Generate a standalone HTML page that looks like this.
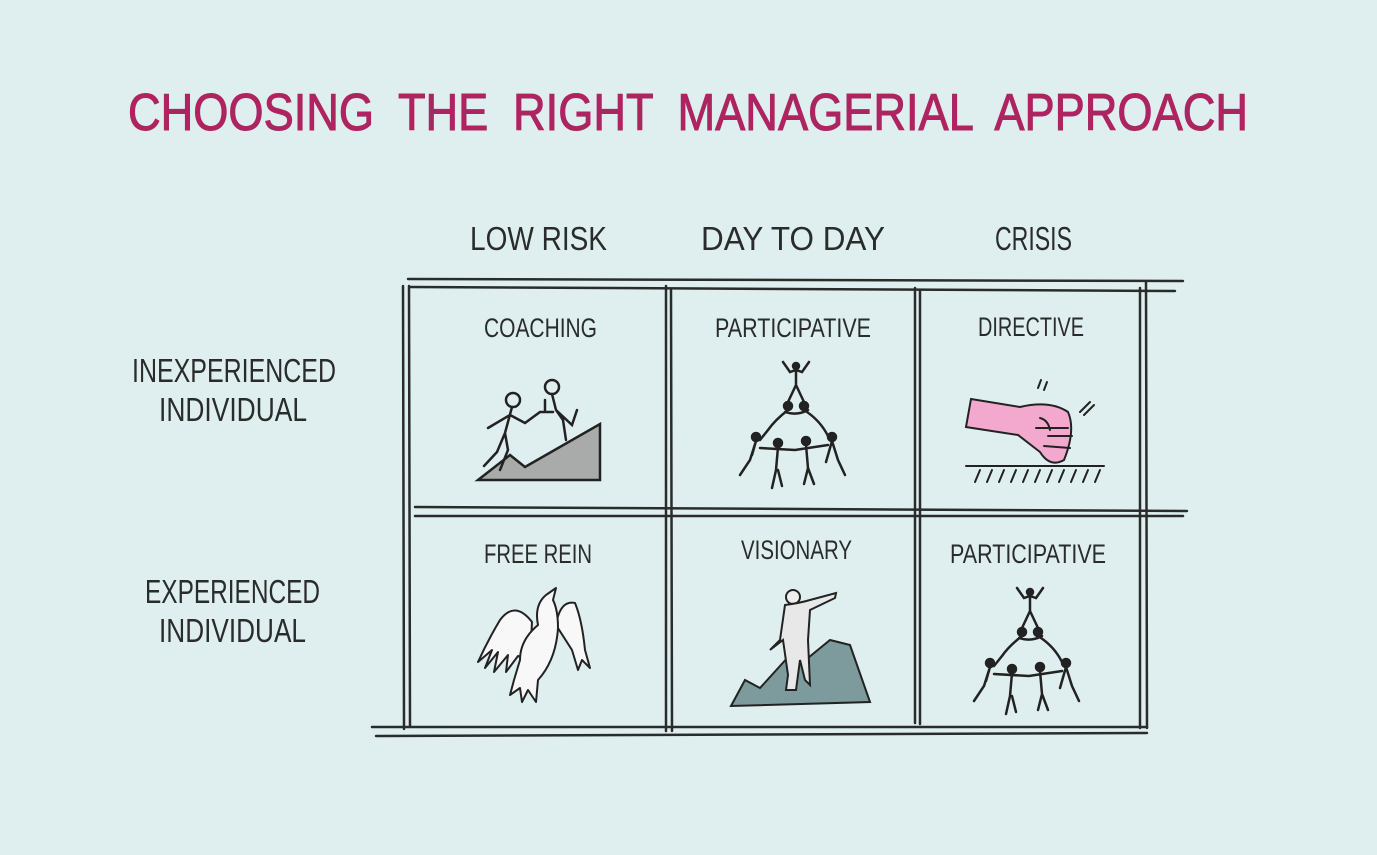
<!DOCTYPE html>
<html><head><meta charset="utf-8"><style>
html,body{margin:0;padding:0;background:#dfeeee;}
svg{display:block}
text{font-family:"Liberation Sans Narrow","Liberation Sans",sans-serif;fill:#2a2c2c}
</style></head><body>
<svg width="1377" height="855" viewBox="0 0 1377 855">
<rect width="1377" height="855" fill="#dfeeee"/>
<text x="128" y="130" font-size="52" word-spacing="14" textLength="1120" lengthAdjust="spacingAndGlyphs" style="fill:#ad2460;stroke:#ad2460;stroke-width:1;font-family:'Liberation Sans Narrow','Liberation Sans',sans-serif">CHOOSING THE RIGHT MANAGERIAL APPROACH</text>
<g font-size="33">
<text x="470" y="250" textLength="137" lengthAdjust="spacingAndGlyphs">LOW RISK</text>
<text x="701" y="250" textLength="184" lengthAdjust="spacingAndGlyphs">DAY TO DAY</text>
<text x="995" y="250" textLength="77" lengthAdjust="spacingAndGlyphs">CRISIS</text>
<text x="132" y="382" textLength="204" lengthAdjust="spacingAndGlyphs">INEXPERIENCED</text>
<text x="159" y="421" textLength="148" lengthAdjust="spacingAndGlyphs">INDIVIDUAL</text>
<text x="145" y="603" textLength="175" lengthAdjust="spacingAndGlyphs">EXPERIENCED</text>
<text x="159" y="642" textLength="147" lengthAdjust="spacingAndGlyphs">INDIVIDUAL</text>
</g>
<g font-size="27">
<text x="484" y="337" textLength="113" lengthAdjust="spacingAndGlyphs">COACHING</text>
<text x="715" y="337" textLength="156" lengthAdjust="spacingAndGlyphs">PARTICIPATIVE</text>
<text x="978" y="336" textLength="106" lengthAdjust="spacingAndGlyphs">DIRECTIVE</text>
<text x="484" y="563" textLength="108" lengthAdjust="spacingAndGlyphs">FREE REIN</text>
<text x="741" y="559" textLength="111" lengthAdjust="spacingAndGlyphs">VISIONARY</text>
<text x="950" y="563" textLength="156" lengthAdjust="spacingAndGlyphs">PARTICIPATIVE</text>
</g>
<g stroke="#2a2c2c" stroke-width="2.5" fill="none" stroke-linecap="round">
<path d="M408 279 L1183 281 M410 287 L1175 291"/>
<path d="M403 286 L404 729 M409 286 L410 727"/>
<path d="M666 286 L666 731 M671 290 L672 731"/>
<path d="M915 288 L915 723 M920 290 L920 724"/>
<path d="M1140 288 L1140 728 M1146 282 L1147 728"/>
<path d="M415 507 L1187 511 M415 516 L1183 516"/>
<path d="M372 727 L1147 727 M376 736 L1147 733"/>
</g>
<path d="M478 480 L510 455 L525 467 L600 424 L600 480 Z" fill="#a9aaaa" stroke="#222" stroke-width="2.5"/>
<g stroke="#222" stroke-width="2.5" fill="none" stroke-linecap="round">
<circle cx="513" cy="400" r="7"/><circle cx="552" cy="387" r="7"/>
<path d="M512 407 L505 433 L497 452 L484 466 M505 433 L508 450 L500 470 M510 415 L488 428 M510 415 L525 423 L540 412 L553 412 M552 394 L556 410 L563 420 L566 440 M556 410 L572 425 L577 410 M545 400 L545 410"/>
</g>
<g id="pyr" stroke="#222" stroke-width="2.5" fill="none" stroke-linecap="round">
<circle cx="796" cy="366" r="3" fill="#222"/>
<path d="M783 362 L790 372 L796 370 L802 372 L809 362 M796 370 L796 385 L788 402 M796 385 L804 402"/>
<circle cx="788" cy="406" r="4" fill="#222"/><circle cx="804" cy="406" r="4" fill="#222"/>
<path d="M788 410 Q775 420 768 430 L760 440 M804 410 Q820 420 828 436 M785 412 Q797 416 808 410"/>
<circle cx="756" cy="437" r="4" fill="#222"/><circle cx="832" cy="437" r="4" fill="#222"/>
<path d="M756 441 L750 460 L740 475 M756 441 L752 455 M832 441 L838 460 L845 475 M832 441 L826 462"/>
<circle cx="778" cy="443" r="4" fill="#222"/><circle cx="806" cy="441" r="4" fill="#222"/>
<path d="M778 447 L776 470 L772 488 M778 470 L782 486 M806 445 L808 468 L804 484 M808 468 L814 484 M760 448 L795 450 L828 445"/>
</g>
<use href="#pyr" transform="translate(234 226)"/>
<g stroke="#222" stroke-width="2" stroke-linecap="round">
<path d="M971 399 L1020 407 Q1050 400 1068 412 Q1076 430 1064 460 Q1050 468 1040 452 L1018 435 L966 427 Z" fill="#f3a9cd"/>
<path d="M1040 418 Q1048 420 1050 430 M1048 436 L1072 436 M1044 446 L1070 448 M1036 428 L1068 428" fill="none"/>
<path d="M966 466 L1104 466 M975 482 L980 470 M987 482 L992 470 M999 482 L1004 470 M1011 482 L1016 470 M1023 482 L1028 470 M1035 482 L1040 470 M1047 482 L1052 470 M1059 482 L1064 470 M1071 482 L1076 470 M1083 482 L1088 470 M1095 482 L1100 470 M1038 388 L1041 380 M1044 390 L1047 382 M1080 412 L1090 402 M1084 415 L1094 405" fill="none"/>
</g>
<g stroke="#222" stroke-width="2" fill="#f8f8f8" stroke-linejoin="round">
<path d="M532 622 Q515 600 500 620 Q488 640 478 662 L492 650 L485 668 L498 652 L494 672 L508 655 L506 672 L518 656 L530 660 Z"/>
<path d="M556 625 Q560 600 575 603 Q582 620 585 650 L590 668 L582 660 L578 670 L572 650 Z"/>
<path d="M538 625 Q534 605 546 595 L556 588 L553 600 Q558 610 558 628 Q556 660 538 680 L536 702 L528 690 L522 702 L520 688 L510 695 L514 680 L520 660 Q520 640 538 625 Z"/>
</g>
<path d="M731 706 L745 680 L760 688 L790 655 L808 658 L830 640 L850 645 L870 702 Z" fill="#7d9a9c" stroke="#222" stroke-width="2"/>
<g stroke="#222" stroke-width="2">
<circle cx="793" cy="597" r="7" fill="#eee"/>
<path d="M785 605 L780 640 L770 650 L783 640 L788 675 L786 690 L796 690 L800 660 L805 680 L810 685 L808 640 L810 610 L835 598 L836 593 L810 600 Q800 603 785 605 Z" fill="#e8e8e8"/>
</g>
</svg>
</body></html>
